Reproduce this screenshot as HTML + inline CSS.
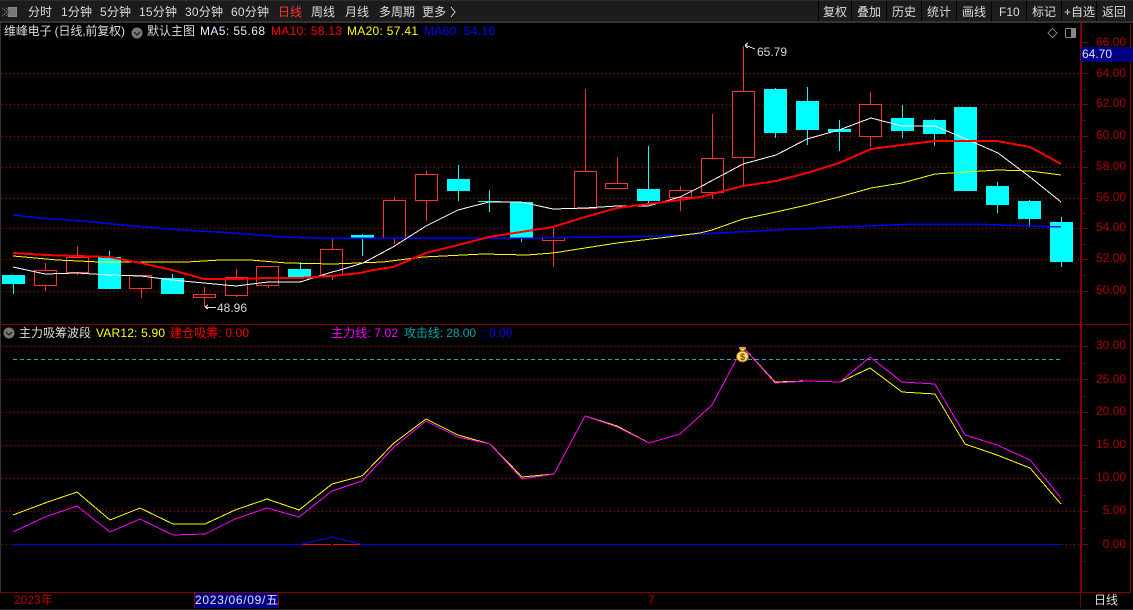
<!DOCTYPE html>
<html><head><meta charset="utf-8"><style>
html,body{margin:0;padding:0;background:#000;width:1133px;height:610px;overflow:hidden}
svg{display:block;position:absolute;left:0;top:0}
text{font-family:"Liberation Sans","Noto Sans CJK SC",sans-serif;font-size:12px;dominant-baseline:auto;shape-rendering:auto}
.ax{fill:#b00000;text-anchor:end}
.tb{fill:#dcdcdc}
</style></head><body>
<svg width="1133" height="610" viewBox="0 0 1133 610" shape-rendering="crispEdges">
<rect width="1133" height="610" fill="#000"/>
<!-- toolbar -->
<rect width="1133" height="22" fill="#1c1c1c"/>
<rect y="0" width="1133" height="1" fill="#2c2c2c"/>
<rect y="21" width="1133" height="2" fill="#333"/>
<path d="M818.5 1V21M851.5 1V21M886.5 1V21M921.5 1V21M956.5 1V21M991.5 1V21M1026.5 1V21M1061.5 1V21M1096.5 1V21" stroke="#000"/>
<rect x="8.5" y="7.5" width="8" height="9" fill="#777" stroke="#888"/>
<path d="M2 8L7 12L2 16M6 8L10 12L6 16" stroke="#666" fill="none"/>
<g class="tb">
<text x="28" y="16" class="tb">分时</text>
<text x="61" y="16" class="tb" textLength="31">1分钟</text>
<text x="100" y="16" class="tb" textLength="31">5分钟</text>
<text x="139" y="16" class="tb" textLength="38">15分钟</text>
<text x="185" y="16" class="tb" textLength="38">30分钟</text>
<text x="231" y="16" class="tb" textLength="38">60分钟</text>
<text x="278" y="16" fill="#ff3030">日线</text>
<text x="311" y="16" class="tb">周线</text>
<text x="345" y="16" class="tb">月线</text>
<text x="379" y="16" class="tb">多周期</text>
<text x="422" y="16" class="tb">更多</text>
<path d="M451 7L455 12L451 17" stroke="#cfcfcf" fill="none"/>
<text x="823" y="16" class="tb">复权</text>
<text x="857" y="16" class="tb">叠加</text>
<text x="892" y="16" class="tb">历史</text>
<text x="927" y="16" class="tb">统计</text>
<text x="962" y="16" class="tb">画线</text>
<text x="999" y="16" class="tb">F10</text>
<text x="1032" y="16" class="tb">标记</text>
<text x="1064" y="16" class="tb">+自选</text>
<text x="1102" y="16" class="tb">返回</text>
</g>
<!-- frames -->
<path d="M0 23V592" stroke="#333" stroke-width="2" fill="none"/>
<path d="M0 324.5H1131M0 592.5H1131M1130.5 23V592" stroke="#800000" fill="none"/>
<path d="M1081 23V592" stroke="#800000" stroke-width="2" fill="none"/>
<path d="M1080.5 592V608" stroke="#800000" fill="none"/>
<path d="M0 609.5H1133" stroke="#2a2a2a" fill="none"/>
<!-- grid -->
<path d="M2 73.5H1080M2 104.5H1080M2 136.5H1080M2 167.5H1080M2 198.5H1080M2 228.5H1080M2 259.5H1080M2 291.5H1080M2 379.5H1080M2 412.5H1080M2 445.5H1080M2 478.5H1080M2 511.5H1080M2 544.5H1080M2 346.5H1080" stroke="#a00000" stroke-dasharray="1 3" fill="none"/>
<!-- axis ticks -->
<path d="M1082 42.5H1088M1082 73.5H1088M1082 104.5H1088M1082 136.5H1088M1082 167.5H1088M1082 198.5H1088M1082 228.5H1088M1082 259.5H1088M1082 291.5H1088M1082 89.5H1085M1082 120.5H1085M1082 151.5H1085M1082 183.5H1085M1082 213.5H1085M1082 244.5H1085M1082 275.5H1085M1082 346.5H1088M1082 379.5H1088M1082 412.5H1088M1082 445.5H1088M1082 478.5H1088M1082 511.5H1088M1082 544.5H1088M1082 363.5H1085M1082 396.5H1085M1082 429.5H1085M1082 462.5H1085M1082 495.5H1085M1082 528.5H1085M1082 561.5H1085" stroke="#800000" fill="none"/>
<!-- axis labels -->
<g>
<text x="1126" y="46" class="ax">66.00</text>
<text x="1126" y="77" class="ax">64.00</text>
<text x="1126" y="107" class="ax">62.00</text>
<text x="1126" y="139" class="ax">60.00</text>
<text x="1126" y="170" class="ax">58.00</text>
<text x="1126" y="201" class="ax">56.00</text>
<text x="1126" y="231" class="ax">54.00</text>
<text x="1126" y="262" class="ax">52.00</text>
<text x="1126" y="294" class="ax">50.00</text>
<text x="1126" y="349" class="ax">30.00</text>
<text x="1126" y="383" class="ax">25.00</text>
<text x="1126" y="415" class="ax">20.00</text>
<text x="1126" y="448" class="ax">15.00</text>
<text x="1126" y="481" class="ax">10.00</text>
<text x="1126" y="514" class="ax">5.00</text>
<text x="1126" y="548" class="ax">0.00</text>
</g>
<rect x="1081" y="47" width="52" height="15" fill="#000080"/>
<text x="1082" y="58" fill="#e0e0ff">64.70</text>
<!-- wicks red -->
<path d="M45.5 263V270M45.5 285V291M77.5 246V257M77.5 272V275M141.5 288V298M204.5 287V294M204.5 297V307M236.5 269V277M236.5 295V297M268.5 285V288M332.5 239V249M332.5 275V280M394.5 197V200M394.5 238V244M426.5 171V174M426.5 200V221M553.5 228V237M553.5 240V267M585.5 89V171M617.5 157V183M680.5 186V190M680.5 197V211M712.5 114V158M712.5 192V199M743.5 46V91M743.5 157V186M870.5 92V104M870.5 136V147" stroke="#ff3232" fill="none"/>
<path d="M34.5 270.5h22v15h-22zM66.5 257.5h22v15h-22zM129.5 275.5h22v13h-22zM193.5 294.5h22v3h-22zM225.5 277.5h22v18h-22zM256.5 266.5h22v19h-22zM320.5 249.5h22v26h-22zM383.5 200.5h22v38h-22zM415.5 174.5h22v26h-22zM542.5 237.5h22v3h-22zM574.5 171.5h22v37h-22zM605.5 183.5h22v5h-22zM669.5 190.5h22v7h-22zM701.5 158.5h22v34h-22zM732.5 91.5h22v66h-22zM859.5 104.5h22v32h-22z" stroke="#ff3232" fill="#000"/>
<!-- wicks cyan -->
<path d="M13.5 284V294M109.5 251V257M172.5 274V278M300.5 262V269M362.5 234V256M458.5 165V201M489.5 190V212M521.5 239V242M648.5 146V203M775.5 88V138M807.5 87V145M839.5 120V151M902.5 105V138M934.5 119V146M997.5 182V213M1029.5 200V227M1061.5 217V267" stroke="#00ffff" fill="none"/>
<g fill="#00ffff">
<rect x="2" y="275" width="23" height="9"/><rect x="98" y="257" width="23" height="32"/><rect x="161" y="278" width="23" height="16"/><rect x="288" y="269" width="23" height="8"/><rect x="351" y="235" width="23" height="3"/><rect x="447" y="179" width="23" height="12"/><rect x="478" y="201" width="23" height="1"/><rect x="510" y="202" width="23" height="37"/><rect x="637" y="189" width="23" height="12"/><rect x="764" y="89" width="23" height="44"/><rect x="796" y="101" width="23" height="29"/><rect x="828" y="129" width="23" height="3"/><rect x="891" y="118" width="23" height="13"/><rect x="923" y="120" width="23" height="14"/><rect x="954" y="107" width="23" height="84"/><rect x="986" y="186" width="23" height="19"/><rect x="1018" y="201" width="23" height="18"/><rect x="1050" y="222" width="23" height="40"/>
</g>
<!-- MA lines -->
<polyline fill="none" stroke="#0000ff" stroke-width="1.5" points="13,215 40,218 83,221 133,226 183,230 233,233 283,237 317,238 360,238 473,238 540,238 600,237 660,236 700,234 776,230 840,227 917,224 973,224 1061,227"/>
<polyline fill="none" stroke="#ffff00" points="13,256 57,260 100,262 187,262 220,260 250,260 287,263 333,264 383,262 423,257 483,254 527,255 553,253 617,243 660,238 700,233 712,230 743,219 776,212 807,205 839,197 871,188 902,183 935,174 966,172 998,170 1030,171 1061,175"/>
<polyline fill="none" stroke="#ffffff" points="13,267 45,274 77,273 109,275 141,276 172,280 204,283 236,286 268,282 300,282 332,272 340,270 363,263 393,247 426,226 458,210 489,202 521,202 553,209 585,208 617,206 648,206 680,197 700,187 743,164 776,155 807,139 839,130 871,118 902,126 935,126 966,139 998,153 1030,177 1061,202"/>
<polyline fill="none" stroke="#ff0000" stroke-width="2" points="13,253 45,255 77,256 109,257 141,263 172,270 204,279 236,279 268,278 300,278 332,276 360,273 373,270 393,267 426,253 458,245 489,237 521,232 553,227 585,217 617,208 648,204 680,200 700,197 712,194 743,186 776,181 807,173 839,163 871,149 902,145 935,141 966,141 997,141 1030,147 1061,164"/>
<!-- annotations -->
<path d="M205 307.5H216M205 307L208 305M205 307L208 309" stroke="#ddd" fill="none"/>
<text x="217" y="312" fill="#d8d8d8">48.96</text>
<path d="M745 45L755 49M745 45L748 43M745 46L748 48" stroke="#ddd" fill="none"/>
<text x="757" y="56" fill="#d8d8d8">65.79</text>
<path d="M1052.5 28.5L1057 33L1052.5 37.5L1048 33Z" stroke="#777" fill="none"/>
<rect x="1065.5" y="28.5" width="10" height="9" rx="1" stroke="#888" fill="none"/>
<rect x="1071" y="29" width="4" height="8" fill="#888"/>
<!-- header main -->
<text x="4" y="35" fill="#dcdcdc" textLength="121">维峰电子 (日线,前复权)</text>
<circle cx="137" cy="33" r="5.5" fill="#777" shape-rendering="auto"/>
<path d="M134 32L137 35L140 32" stroke="#111" fill="none" shape-rendering="auto"/>
<text x="147" y="35" fill="#dcdcdc">默认主图</text>
<text x="200" y="35" fill="#dfefff" textLength="65">MA5: 55.68</text>
<text x="271" y="35" fill="#ff0000" textLength="71">MA10: 58.13</text>
<text x="347" y="35" fill="#ffff00" textLength="71">MA20: 57.41</text>
<text x="424" y="35" fill="#0000ff" textLength="71">MA60: 54.16</text>
<!-- lower header -->
<circle cx="9" cy="333" r="5.5" fill="#777" shape-rendering="auto"/>
<path d="M6 332L9 335L12 332" stroke="#111" fill="none" shape-rendering="auto"/>
<text x="19" y="337" fill="#dcdcdc">主力吸筹波段</text>
<text x="96" y="337" fill="#ffff00" textLength="69">VAR12: 5.90</text>
<text x="170" y="337" fill="#ff0000" textLength="79">建仓吸筹: 0.00</text>
<text x="331" y="337" fill="#ff00ff" textLength="67">主力线: 7.02</text>
<text x="404" y="337" fill="#00a8a8" textLength="72">攻击线: 28.00</text>
<text x="481" y="337" fill="#0000ff">:</text>
<text x="489" y="337" fill="#0000ff">0.00</text>
<!-- lower lines -->
<path d="M13 359.5H1061" stroke="#1fb5b0" stroke-dasharray="4 3" fill="none"/>
<polyline fill="none" stroke="#ffff00" points="13,515 45,503 77,492 110,520 140,508 173,524 205,524 235,510 267,499 299,510 332,484 362,476 394,443 426,419 458,435 490,444 522,477 554,474 585,416 617,426 649,443 680,434 712,405 743,347 775,382 807,381 840,382 870,368 902,392 935,394 965,444 997,455 1030,468 1061,504"/>
<polyline fill="none" stroke="#ff00ff" points="13,532 45,517 77,506 110,532 140,519 173,535 205,534 235,519 267,508 299,517 332,491 362,481 394,447 426,421 458,437 490,444 522,479 554,474 585,416 617,427 649,443 680,434 712,405 743,347 775,383 807,381 840,382 870,357 902,382 935,384 965,435 997,445 1030,460 1061,498"/>
<path d="M302 544.5H331M333 544.5H360" stroke="#ff0000" fill="none"/>
<polyline fill="none" stroke="#0000ff" points="302,544 332,537 360,544"/>
<path d="M13 544.5H302M360 544.5H1061" stroke="#0000ff" fill="none"/>
<!-- money bag -->
<g shape-rendering="auto">
<rect x="739" y="347" width="7" height="2" fill="#d9a520"/>
<path d="M740 349L745 349L744 351L741 351Z" fill="#f0e070"/>
<ellipse cx="742.5" cy="356.5" rx="6" ry="5.5" fill="#f4e45a" stroke="#8a5a10" stroke-width="1"/>
<text x="742.5" y="360" text-anchor="middle" fill="#8a3020" style="font-size:9px;font-weight:bold">$</text>
</g>
<!-- bottom -->
<text x="14" y="604" fill="#b00000">2023年</text>
<rect x="194" y="593" width="85" height="15" fill="#000080"/>
<path d="M194.5 593V608M278.5 593V608" stroke="#800000"/>
<text x="195" y="604" fill="#e0e0ff" textLength="83">2023/06/09/五</text>
<text x="648" y="604" fill="#b00000">7</text>
<text x="1094" y="604" fill="#dcdcdc">日线</text>
</svg>
</body></html>
